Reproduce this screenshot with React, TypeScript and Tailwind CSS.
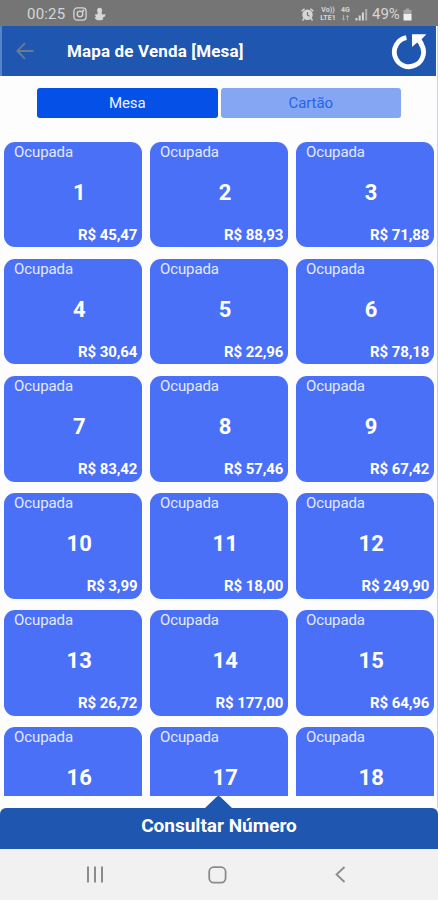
type Table = { id: number; total?: string };

const tables: Table[] = [
  { id: 1, total: '45,47' },
  { id: 2, total: '88,93' },
  { id: 3, total: '71,88' },
  { id: 4, total: '30,64' },
  { id: 5, total: '22,96' },
  { id: 6, total: '78,18' },
  { id: 7, total: '83,42' },
  { id: 8, total: '57,46' },
  { id: 9, total: '67,42' },
  { id: 10, total: '3,99' },
  { id: 11, total: '18,00' },
  { id: 12, total: '249,90' },
  { id: 13, total: '26,72' },
  { id: 14, total: '177,00' },
  { id: 15, total: '64,96' },
  { id: 16 },
  { id: 17 },
  { id: 18 },
];

function StatusBar() {
  return (
    <div className="flex h-[26px] shrink-0 items-center bg-[#757575] pl-[27px] pt-[2px] text-[#d6d6d6]">
      <span className="w-[46px] text-[15px] leading-none tracking-[0.2px]">00:25</span>
      <svg className="h-[14px] w-[14px]" viewBox="0 0 14 14" fill="none" stroke="currentColor" strokeWidth="1.3">
        <rect x="0.9" y="0.9" width="12.2" height="12.2" rx="3.4" />
        <circle cx="7" cy="7" r="2.8" />
        <circle cx="10.3" cy="3.7" r="0.5" />
      </svg>
      <svg className="ml-[7px] h-[14px] w-[12px]" viewBox="0 0 12 14" fill="currentColor">
        <circle cx="5.6" cy="3.2" r="2.5" />
        <path d="M3.6 4.5h4l.2 3.1 3.9-.4-1 2.5-2 .9.6 1.7-2.1 1H3.2L.6 11.1l1.4-1.5L.5 7.8l3.1-.7z" />
      </svg>
      <div className="ml-auto mr-[26px] flex items-center">
        <svg className="h-[13px] w-[13px]" viewBox="0 0 13 13" fill="none" stroke="currentColor" strokeWidth="1.5">
          <circle cx="6.5" cy="6.8" r="4.5" fill="currentColor" />
          <path d="M.6 3.3 3.6.7M12.4 3.3 9.4.7M3 10.6l-1.5 1.8M10 10.6l1.5 1.8" />
          <path d="M6.5 4v3.2l2.2 1" stroke="#757575" strokeWidth="1.2" />
        </svg>
        <div className="ml-[5px] w-[18px] text-center text-[7px] font-bold leading-[8px]">
          <div>Vo))</div>
          <div>LTE1</div>
        </div>
        <div className="ml-[3px] w-[11px] text-center text-[7px] font-bold leading-[8px]">
          <div>4G</div>
          <svg className="mx-auto h-[8px] w-[9px] opacity-60" viewBox="0 0 9 8" fill="none" stroke="currentColor">
            <path d="M2.5 1v5M1 4.5l1.5 1.7L4 4.5M6.5 6.5v-5M5 3l1.5-1.7L8 3" />
          </svg>
        </div>
        <svg className="ml-[4px] h-[13px] w-[13px]" viewBox="0 0 13 13" fill="currentColor">
          <path d="M.5 10h2v2.5h-2zM3.7 7.5h2v5h-2zM6.9 4.5h2v8h-2z" />
          <path d="M10.2 1h2v11.5h-2z" opacity=".6" />
        </svg>
        <span className="ml-[4px] w-[30px] text-[15px] leading-none">49%</span>
        <svg className="ml-[1px] h-[13px] w-[9px]" viewBox="0 0 9 13">
          <path d="M2.8.5h3.4V2H8.5v4.5h-8V2h2.3z" fill="#a6a6a6" />
          <path d="M.5 6h8v6.5h-8z" fill="#f0f0f0" />
        </svg>
      </div>
    </div>
  );
}

function Header() {
  return (
    <header className="mr-[1px] flex h-[50px] shrink-0 items-center border-l-2 border-[#5584c8] bg-[#1e56b0] pr-[9px]">
      <svg className="ml-[14px] h-[18px] w-[18px]" viewBox="0 0 18 18" fill="none" stroke="#6b7a94" strokeWidth="1.8">
        <path d="M17.5 9H1.5M9 1.2 1.3 9 9 16.8" />
      </svg>
      <h1 className="ml-[33px] text-[17px] font-bold leading-5 tracking-[0.15px] text-white">Mapa de Venda [Mesa]</h1>
      <svg className="ml-auto h-[38px] w-[36px]" viewBox="0 0 36 38" fill="none">
        <path d="M15.4 5.7A14.6 14.6 0 1 0 29.6 11.3" stroke="#fff" strokeWidth="4.8" />
        <path d="M21 2.2H35.4L30.6 7.2 33 11.5 28.2 13 26.2 10.6 21 15z" fill="#fff" />
      </svg>
    </header>
  );
}

function TableCard({ id, total }: Table) {
  return (
    <div className="flex h-[105.4px] flex-col rounded-[11px] bg-[#4a70f7] text-white">
      <span className="pl-[10px] pt-[2px] text-[15px] leading-[17px] tracking-[-0.1px] text-[#e4eafe]">Ocupada</span>
      <span className="mt-[19px] pl-[12px] text-center text-[22px] font-bold leading-[26px]">{id}</span>
      {total && (
        <span className="mt-[20px] pr-[5px] text-right text-[15px] font-bold leading-[18px] tracking-[-0.1px]">
          R$ {total}
        </span>
      )}
    </div>
  );
}

export default function App() {
  return (
    <div className="flex h-[900px] w-[438px] flex-col overflow-hidden bg-[#fdfdfe] font-['Roboto',sans-serif]">
      <StatusBar />
      <div className="flex min-h-0 flex-1 flex-col border-r border-[#d2d2d4]">
        <Header />
        <div className="ml-[37px] mt-[12px] flex h-[30px] w-[364px] shrink-0 gap-[3px] text-[15px] tracking-[-0.1px]">
          <button className="flex-1 rounded-[3px] bg-[#0550e6] leading-[28px] text-[#eef3ff]">Mesa</button>
          <button className="flex-1 rounded-[3px] bg-[#85a7f3] leading-[28px] text-[#2a62e6]">Cartão</button>
        </div>
        <main className="mt-[24px] min-h-0 flex-1 overflow-hidden pl-[4px] pr-[3px]">
          <div className="grid grid-cols-[138.4px_138.4px_138.4px] gap-x-[7.6px] gap-y-[11.7px]">
            {tables.map((table) => (
              <TableCard key={table.id} {...table} />
            ))}
          </div>
        </main>
        <div className="flex h-[12px] shrink-0 justify-center">
          <svg className="h-[12px] w-[27px]" viewBox="0 0 27 12">
            <path d="M0 12 11.5 1Q13.5-.8 15.5 1L27 12z" fill="#1e56b0" />
          </svg>
        </div>
      </div>
      <footer className="h-[41px] shrink-0 rounded-t-[6px] bg-[#1e56b0] text-center text-[19px] font-bold leading-[35px] text-white">
        Consultar Número
      </footer>
      <nav className="flex h-[51px] shrink-0 items-center bg-[#f1f1f2] pl-[86px]">
        <svg className="h-[17px] w-[18px]" viewBox="0 0 18 17" stroke="#8c8c8c" strokeWidth="2">
          <path d="M2 .5v16M9 .5v16M16 .5v16" />
        </svg>
        <svg className="ml-[104px] h-[18px] w-[19px]" viewBox="0 0 19 18" fill="none" stroke="#8c8c8c" strokeWidth="1.8">
          <rect x="1.2" y="1.2" width="16.4" height="15.4" rx="4.5" />
        </svg>
        <svg className="ml-[108px] h-[17px] w-[11px]" viewBox="0 0 11 17" fill="none" stroke="#8c8c8c" strokeWidth="1.8">
          <path d="M9.5 1 1.5 8.5l8 7.5" />
        </svg>
      </nav>
    </div>
  );
}
